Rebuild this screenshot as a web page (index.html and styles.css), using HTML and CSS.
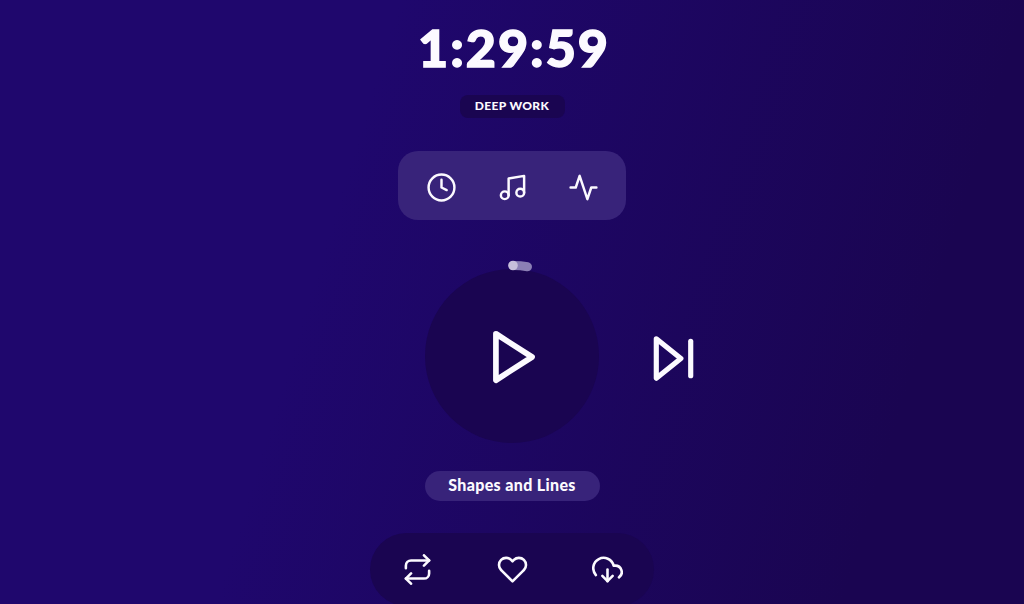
FILE: index.html
```html
<!DOCTYPE html>
<html lang="en">
<head>
  <title>Deep Work Timer</title>
  <meta charset="UTF-8">
  <meta name="viewport" content="width=device-width, initial-scale=1">
  <link rel="stylesheet" href="styles.css">
</head>
<body>
  <main class="app">
    <h1 class="timer">1:29:59</h1>
    <span class="mode">DEEP WORK</span>

    <nav class="tabs">
      <button aria-label="Timer">
        <svg class="icon" viewBox="0 0 24 24"><circle cx="12" cy="12" r="10"/><polyline points="12 6 12 12 16 14"/></svg>
      </button>
      <button aria-label="Music">
        <svg class="icon" viewBox="0 0 24 24"><path d="M9 18V5l12-2v13"/><circle cx="6" cy="18" r="3"/><circle cx="18" cy="16" r="3"/></svg>
      </button>
      <button aria-label="Activity">
        <svg class="icon" viewBox="0 0 24 24"><polyline points="22 12 18 12 15 21 9 3 6 12 2 12"/></svg>
      </button>
    </nav>

    <section class="player">
      <div class="dial">
        <button class="play" aria-label="Play">
          <svg class="icon" viewBox="0 0 24 24"><polygon points="5 3 19 12 5 21 5 3"/></svg>
        </button>
        <svg class="progress" viewBox="0 0 26 12">
          <path d="M6 5.5Q14 5.5 20.5 6.7"/>
          <circle cx="6" cy="5.5" r="4.8"/>
        </svg>
      </div>
      <button class="skip" aria-label="Next track">
        <svg class="icon" viewBox="0 0 24 24"><polygon points="5 4 15 12 5 20 5 4"/><line x1="19" y1="5" x2="19" y2="19"/></svg>
      </button>
    </section>

    <span class="track">Shapes and Lines</span>

    <footer class="actions">
      <button aria-label="Repeat">
        <svg class="icon" viewBox="0 0 24 24"><polyline points="17 1 21 5 17 9"/><path d="M3 11V9a4 4 0 0 1 4-4h14"/><polyline points="7 23 3 19 7 15"/><path d="M21 13v2a4 4 0 0 1-4 4H3"/></svg>
      </button>
      <button aria-label="Like">
        <svg class="icon" viewBox="0 0 24 24"><path d="M20.84 4.61a5.5 5.5 0 0 0-7.78 0L12 5.67l-1.06-1.06a5.5 5.5 0 0 0-7.78 7.78l1.06 1.06L12 21.23l7.78-7.78 1.06-1.06a5.5 5.5 0 0 0 0-7.78z"/></svg>
      </button>
      <button aria-label="Download">
        <svg class="icon" viewBox="0 0 24 24"><polyline points="8 17 12 21 16 17"/><line x1="12" y1="12" x2="12" y2="21"/><path d="M20.88 18.09A5 5 0 0 0 18 9h-1.26A8 8 0 1 0 3 16.29"/></svg>
      </button>
    </footer>
  </main>
</body>
</html>
```
FILE: styles.css
```css
:root {
  --bg: #1f076d;
  --dark: #1a0551;
  --panel: #38237a;
  --text: #fcfaff;
}

* {
  box-sizing: border-box;
}

body {
  margin: 0;
  height: 100vh;
  overflow: hidden;
  font-family: Lato, sans-serif;
  font-weight: 900;
  color: var(--text);
  background: linear-gradient(107deg, var(--bg) 33%, var(--dark) 85%);
}

button {
  display: flex;
  padding: 0;
  border: none;
  background: none;
  color: inherit;
  cursor: pointer;
}

.app {
  display: flex;
  flex-direction: column;
  align-items: center;
  padding-top: 16px;
}

.timer {
  margin: 0;
  padding-left: 4px;
  font-size: 52px;
  font-weight: 900;
  line-height: 62px;
  letter-spacing: 2px;
  -webkit-text-stroke: 1.4px var(--text);
}

.mode {
  margin-top: 17px;
  width: 105px;
  height: 23px;
  border-radius: 8px;
  background: var(--dark);
  font-size: 12px;
  line-height: 22px;
  letter-spacing: 0.35px;
  text-align: center;
}

.icon {
  width: 31px;
  height: 31px;
  fill: none;
  stroke: currentColor;
  stroke-width: 2;
  stroke-linecap: round;
  stroke-linejoin: round;
}

.tabs {
  display: flex;
  align-items: center;
  justify-content: center;
  gap: 40px;
  margin-top: 33px;
  width: 228px;
  height: 69px;
  padding-top: 4px;
  border-radius: 20px;
  background: var(--panel);
}

.tabs .icon {
  stroke-width: 1.9;
}

.player {
  display: grid;
  grid-template-columns: 1fr 174px 1fr;
  align-items: center;
  margin-top: 49px;
  width: 100%;
}

.dial {
  grid-column: 2;
  position: relative;
}

.play {
  align-items: center;
  justify-content: center;
  width: 174px;
  height: 174px;
  padding: 2px 0 0 4px;
  border-radius: 50%;
  background: var(--dark);
}

.play .icon {
  width: 62px;
  height: 62px;
  stroke-width: 2.2;
}

/* sits on the rim of the dial */
.progress {
  position: absolute;
  top: -9px;
  left: 81.5px;
  width: 26px;
  height: 12px;
}

.progress path {
  fill: none;
  stroke: #8b7fb5;
  stroke-width: 9;
  stroke-linecap: round;
}

.progress circle {
  fill: #c7bfdb;
}

.skip {
  margin: 5px 0 0 44.5px;
}

.skip .icon {
  width: 59px;
  height: 59px;
  stroke-width: 2.1;
}

.track {
  margin-top: 28px;
  width: 175px;
  height: 30px;
  border-radius: 15px;
  background: var(--panel);
  font-size: 16px;
  line-height: 28px;
  letter-spacing: 0.35px;
  text-align: center;
}

.actions {
  display: flex;
  align-items: center;
  justify-content: center;
  gap: 64px;
  margin-top: 32px;
  width: 284px;
  height: 73px;
  border-radius: 37px;
  background: var(--dark);
}
```
